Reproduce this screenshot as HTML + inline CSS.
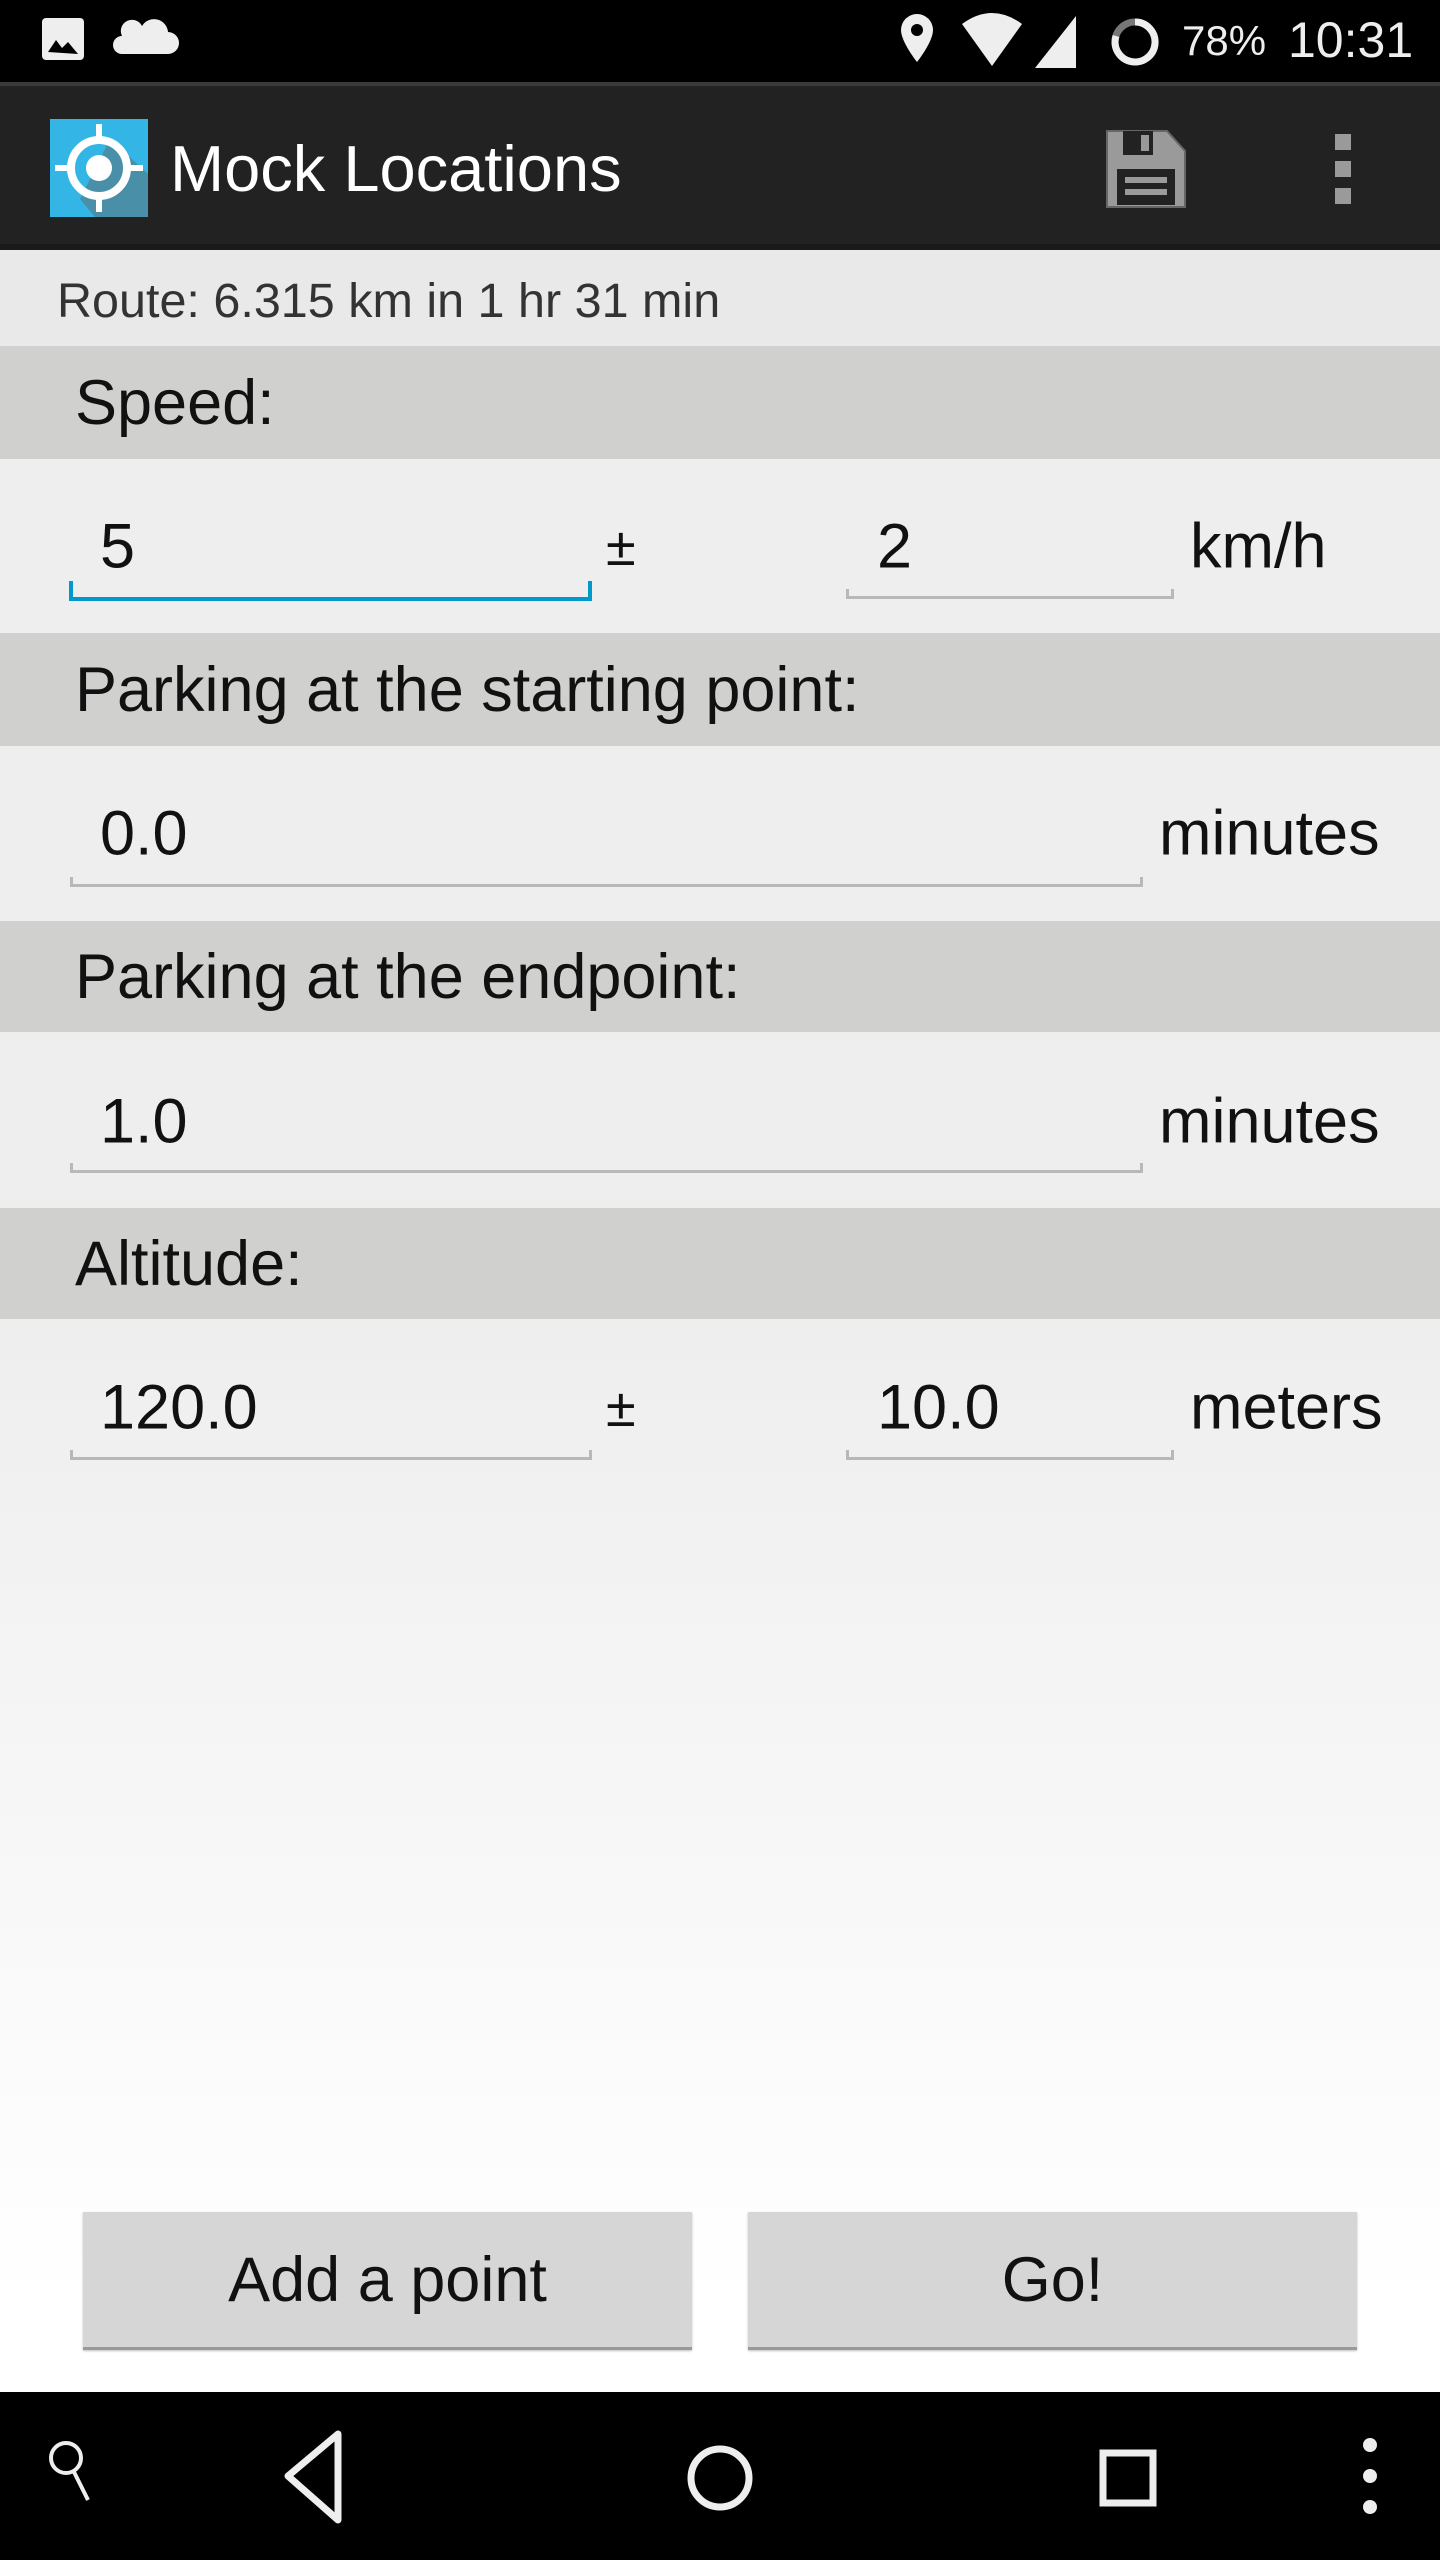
<!DOCTYPE html>
<html><head><meta charset="utf-8"><style>
*{margin:0;padding:0;box-sizing:border-box}
body{width:1440px;height:2560px;position:relative;overflow:hidden;font-family:"Liberation Sans",Roboto,sans-serif;background:linear-gradient(#eeeeee 0px,#eeeeee 1319px,#ffffff 2300px)}
.a{position:absolute}
.hdr{position:absolute;left:0;width:1440px;background:#d0d0cf;font-size:63px;color:#111;padding-left:75px;display:flex;align-items:center}
.t{position:absolute;font-size:63px;color:#111;line-height:1;transform:translateY(-50%)}
.ul{position:absolute;height:10px;border:3px solid #b8b8b8;border-top:none}
.btn{position:absolute;top:2212px;height:138px;width:609px;background:#d6d6d6;border-bottom:3px solid #9a9a9a;box-shadow:0 1px 2px rgba(0,0,0,.25);font-size:63px;color:#111;display:flex;align-items:center;justify-content:center}
</style></head><body>
<div class="a" style="left:0;top:0;width:1440px;height:82px;background:#000"></div>
<svg class="a" style="left:0;top:0" width="1440" height="82">
<rect x="42" y="18" width="42" height="42" rx="4" fill="#eee"/>
<path d="M48 52 L56 40 L62 48 L68 42 L78 54 Z" fill="#000"/>
<path d="M122 54 h46 a10 10 0 0 0 0 -22 a14 14 0 0 0 -26 -6 a11 11 0 0 0 -20 10 a9 9 0 0 0 0 18z" fill="#eee"/>
<path d="M917 14 a16 16 0 0 1 16 16 c0 12 -16 32 -16 32 c0 0 -16 -20 -16 -32 a16 16 0 0 1 16 -16z" fill="#eee"/>
<circle cx="917" cy="30" r="6" fill="#000"/>
<path d="M962 24 q30 -22 60 0 l-30 42z" fill="#eee"/>
<path d="M1035 68 L1076 16 V68Z" fill="#eee"/>
<circle cx="1135" cy="42" r="20" fill="none" stroke="#777" stroke-width="7"/>
<path d="M1135 22 a20 20 0 1 1 -19 14" fill="none" stroke="#eee" stroke-width="7"/>
<text x="1182" y="55" font-size="42" fill="#eee" font-family="Liberation Sans">78%</text>
<text x="1288" y="57" font-size="50" fill="#eee" font-family="Liberation Sans">10:31</text>
</svg>
<div class="a" style="left:0;top:82px;width:1440px;height:168px;background:#222;border-top:4px solid #3a3a3a;border-bottom:6px solid #1a1a1a"></div>
<svg class="a" style="left:50px;top:119px" width="98" height="98" viewBox="0 0 98 98">
<rect width="98" height="98" fill="#33b5e5"/>
<path d="M60 20 L98 55 V98 H45 L30 80Z" fill="#4a8fa8"/>
<circle cx="49" cy="49" r="28" fill="none" stroke="#fff" stroke-width="8"/>
<circle cx="49" cy="49" r="13" fill="#fff"/>
<path d="M49 5 V21 M49 77 V93 M5 49 H21 M77 49 H93" stroke="#fff" stroke-width="6"/>
</svg>
<div class="a" style="left:170px;top:133px;font-size:65px;color:#fff;line-height:72px">Mock Locations</div>
<svg class="a" style="left:1105px;top:127px" width="82" height="84" viewBox="0 0 82 84">
<path d="M2 4 H62 L80 24 V80 H2Z" fill="#9a9a9a" stroke="#666" stroke-width="2"/>
<rect x="18" y="4" width="30" height="24" fill="#222"/><rect x="36" y="8" width="8" height="16" fill="#9a9a9a"/>
<rect x="12" y="42" width="58" height="36" fill="#222"/>
<rect x="20" y="50" width="42" height="6" fill="#9a9a9a"/><rect x="20" y="62" width="42" height="6" fill="#9a9a9a"/>
</svg>
<div class="a" style="left:1335px;top:134px;width:16px;height:16px;background:#9a9a9a"></div>
<div class="a" style="left:1335px;top:161px;width:16px;height:16px;background:#9a9a9a"></div>
<div class="a" style="left:1335px;top:188px;width:16px;height:16px;background:#9a9a9a"></div>
<div class="a" style="left:0;top:250px;width:1440px;height:96px;background:#e9e9e9"></div>
<div class="t" style="left:57px;top:301px;font-size:48.5px;color:#333">Route: 6.315 km in 1 hr 31 min</div>
<div class="hdr" style="top:346px;height:113px">Speed:</div>
<div class="t" style="left:100px;top:547px">5</div>
<div class="a" style="left:69px;top:581px;width:523px;height:20px;border:4px solid #0099cc;border-top:none"></div>
<div class="t" style="left:606px;top:547px;font-size:54px">±</div>
<div class="t" style="left:877px;top:547px">2</div>
<div class="ul" style="left:846px;top:589px;width:328px"></div>
<div class="t" style="left:1190px;top:547px">km/h</div>
<div class="hdr" style="top:633px;height:113px">Parking at the starting point:</div>
<div class="t" style="left:100px;top:834px">0.0</div>
<div class="ul" style="left:70px;top:877px;width:1073px"></div>
<div class="t" style="left:1159px;top:834px">minutes</div>
<div class="hdr" style="top:921px;height:111px">Parking at the endpoint:</div>
<div class="t" style="left:100px;top:1122px">1.0</div>
<div class="ul" style="left:70px;top:1163px;width:1073px"></div>
<div class="t" style="left:1159px;top:1122px">minutes</div>
<div class="hdr" style="top:1208px;height:111px">Altitude:</div>
<div class="t" style="left:100px;top:1408px">120.0</div>
<div class="ul" style="left:70px;top:1450px;width:522px"></div>
<div class="t" style="left:606px;top:1408px;font-size:54px">±</div>
<div class="t" style="left:877px;top:1408px">10.0</div>
<div class="ul" style="left:846px;top:1450px;width:328px"></div>
<div class="t" style="left:1190px;top:1408px">meters</div>
<div class="btn" style="left:83px">Add a point</div>
<div class="btn" style="left:748px">Go!</div>
<div class="a" style="left:0;top:2392px;width:1440px;height:168px;background:#000"></div>
<svg class="a" style="left:0;top:2392px" width="1440" height="168">
<circle cx="66" cy="habitat" r="0" fill="none"/>
<circle cx="66" cy="66" r="15" fill="none" stroke="#eee" stroke-width="4"/>
<path d="M74 80 L88 108" stroke="#eee" stroke-width="4"/>
<path d="M338 42 L288 84 L338 128 Z" fill="none" stroke="#eee" stroke-width="7" stroke-linejoin="round"/>
<circle cx="720" cy="86" r="29" fill="none" stroke="#eee" stroke-width="7"/>
<rect x="1103" y="61" width="50" height="50" fill="none" stroke="#eee" stroke-width="7"/>
<circle cx="1370" cy="53" r="7" fill="#eee"/><circle cx="1370" cy="84" r="7" fill="#eee"/><circle cx="1370" cy="115" r="7" fill="#eee"/>
</svg>
</body></html>
